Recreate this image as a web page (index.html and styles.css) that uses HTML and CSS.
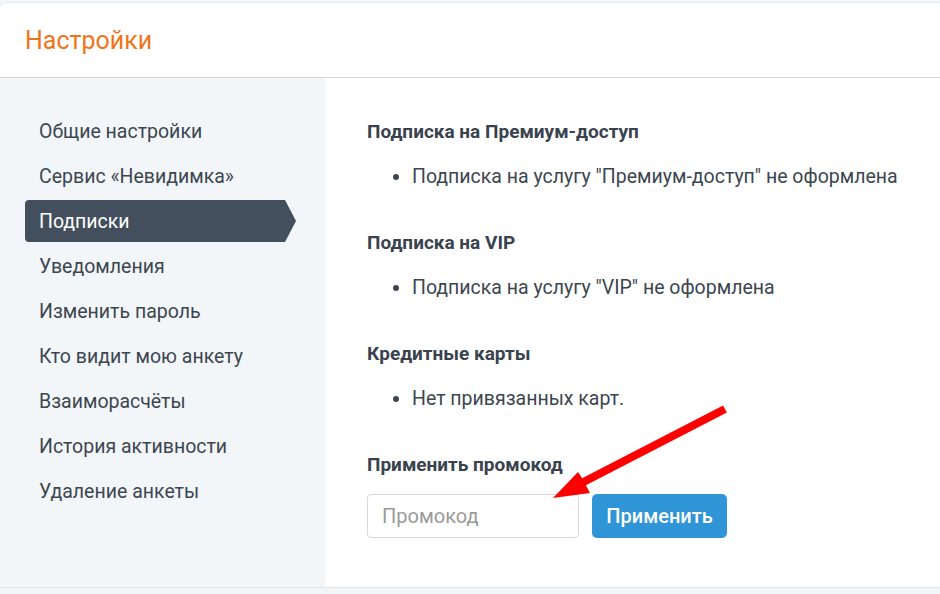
FILE: index.html
```html
<!DOCTYPE html>
<html lang="ru">
<head>
    <meta charset="UTF-8">
    <title>Настройки</title>
    <link rel="stylesheet" href="styles.css">
</head>
<body>
    <div class="card">
        <div class="card-header">
            <h1>Настройки</h1>
        </div>
        <div class="card-body">
            <ul class="side-menu">
                <li>Общие настройки</li>
                <li>Сервис «Невидимка»</li>
                <li class="active">Подписки</li>
                <li>Уведомления</li>
                <li>Изменить пароль</li>
                <li>Кто видит мою анкету</li>
                <li>Взаиморасчёты</li>
                <li>История активности</li>
                <li>Удаление анкеты</li>
            </ul>
            <div class="content">
                <div class="section">
                    <h3>Подписка на Премиум-доступ</h3>
                    <ul>
                        <li>Подписка на услугу "Премиум-доступ" не оформлена</li>
                    </ul>
                </div>
                <div class="section">
                    <h3>Подписка на VIP</h3>
                    <ul>
                        <li>Подписка на услугу "VIP" не оформлена</li>
                    </ul>
                </div>
                <div class="section">
                    <h3>Кредитные карты</h3>
                    <ul>
                        <li>Нет привязанных карт.</li>
                    </ul>
                </div>
                <h3 class="promo-title">Применить промокод</h3>
                <div class="promo-form">
                    <input type="text" class="promo-input" placeholder="Промокод">
                    <button class="btn">Применить</button>
                </div>
            </div>
        </div>
    </div>

    <svg class="pointer" width="940" height="594" viewBox="0 0 940 594">
        <polygon fill="#ff0000" points="553,498 578,472 582.1,478.3 723.1,405.5 726.9,412.5 585.9,485.3 590,493"/>
    </svg>
</body>
</html>
```

FILE: styles.css
```css
body {
    font-family: Roboto, "Liberation Sans", Arial, sans-serif;
    background-color: #f3f6f9;
    color: #3c4650;
    margin: 0;
    padding-top: 2px;
    overflow: hidden;
}
.card {
    width: calc(100% + 10px);
    background: #fff;
    border-top: 1px solid #e2e7ec;
    border-bottom: 1px solid #e2e4e6;
    border-radius: 7px 7px 0 0;
}
.card-header {
    height: 74px;
    border-bottom: 1px solid #d6d6d6;
    display: flex;
    align-items: center;
    padding-left: 25px;
}
.card-header h1 {
    margin: 0;
    font-size: 25px;
    font-weight: 400;
    color: #ef7419;
}
.card-body {
    display: flex;
}
.side-menu {
    width: 300px;
    flex-shrink: 0;
    background: #f3f6f9;
    list-style: none;
    margin: 0;
    padding: 32px 0 0 25px;
}
.side-menu li {
    width: 271px;
    height: 42px;
    line-height: 44px;
    margin-bottom: 3px;
    padding-left: 14px;
    box-sizing: border-box;
    font-size: 19.5px;
    color: #3c4650;
}
.side-menu li.active {
    background: #434f5c;
    color: #fff;
    border-radius: 4px 0 0 4px;
    clip-path: polygon(0 0, 260px 0, 271px 50%, 260px 100%, 0 100%);
}
.content {
    flex: 1;
    padding: 42px 0 49px 42px;
}
.content h3 {
    margin: 0 0 21px;
    font-size: 19px;
    line-height: 24px;
    font-weight: 700;
    color: #39434e;
}
.section {
    margin-bottom: 42px;
}
.section ul {
    margin: 0;
    padding-left: 45px;
}
.section li {
    font-size: 19.5px;
    line-height: 24px;
}
.content h3.promo-title {
    margin-bottom: 17px;
}
.promo-form {
    display: flex;
    gap: 13px;
}
.promo-input {
    width: 212px;
    height: 44px;
    box-sizing: border-box;
    border: 1px solid #d8d8d8;
    border-radius: 4px;
    padding: 0 14px;
    font-family: inherit;
    font-size: 20px;
    outline: none;
}
.promo-input::placeholder {
    color: #9a9a9a;
}
.btn {
    width: 135px;
    height: 44px;
    border: none;
    border-radius: 5px;
    background: #3095d7;
    color: #fff;
    font-family: inherit;
    font-size: 20px;
    font-weight: 500;
    cursor: pointer;
}
.pointer {
    position: absolute;
    left: 0;
    top: 0;
    pointer-events: none;
}
```
